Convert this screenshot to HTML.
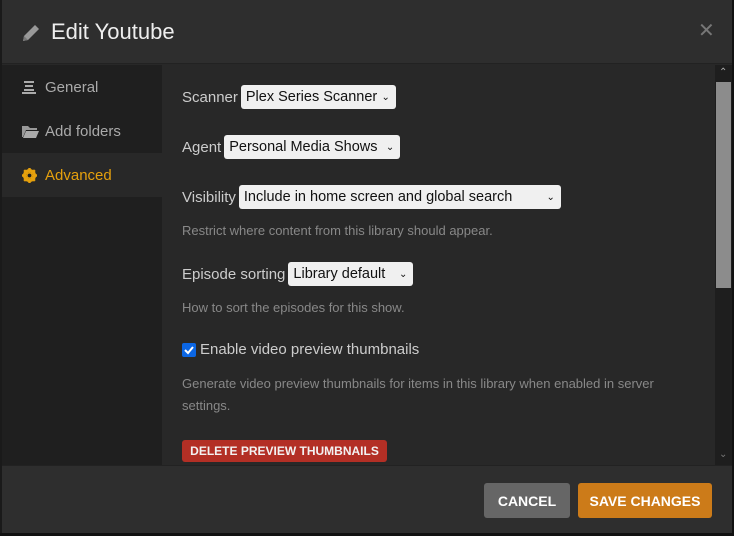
<!DOCTYPE html>
<html><head><style>
*{box-sizing:border-box;margin:0;padding:0}
body{width:734px;height:536px;background:#111;font-family:"Liberation Sans",sans-serif;overflow:hidden;position:relative}
.modal{position:absolute;left:0;top:0;width:732px;height:533px;background:#282828;border-left:2px solid #1a1a1a}
.hdr{position:absolute;left:0;top:0;width:730px;height:64px;background:#2e2e2e;border-bottom:1px solid #222}
.hdr h1{position:absolute;left:49px;top:19px;font-size:22px;font-weight:normal;color:#eee}
.x{position:absolute;left:696px;top:18px;color:#777;font-size:20px}
.side{position:absolute;left:0;top:65px;width:160px;height:400px;background:#1f1f1f}
.si{position:absolute;left:0;width:160px;height:44px;color:#aaa;font-size:15px;padding:14px 0 0 43px}
.si.act{background:#282828;color:#e5a00d}
.ic{position:absolute;left:20px;top:15px}
.content{position:absolute;left:158px;top:65px;width:555px;height:400px;color:#ccc;font-size:15px}
.row{position:absolute;left:22px;display:flex;align-items:center}
.sel{background:#f0f0f0;color:#111;border-radius:3px;height:24px;padding:0 6px 0 5px;margin-left:3px;font-size:14.5px;display:flex;align-items:center;justify-content:space-between}
.help{position:absolute;left:22px;color:#888;font-size:13px;line-height:22px}
.sb{position:absolute;left:713px;top:65px;width:17px;height:400px;background:#1e1e1e}
.thumb{position:absolute;left:1px;top:17px;width:15px;height:206px;background:#8c8c8c}
.ftr{position:absolute;left:0;top:465px;width:730px;height:68px;background:#2e2e2e;border-top:1px solid #222}
.btn{position:absolute;top:17px;height:35px;border-radius:3px;color:#fff;font-weight:bold;font-size:14px;display:flex;align-items:center;justify-content:center}
</style></head><body>
<div class="modal">
<div class="hdr">
<svg style="position:absolute;left:19px;top:23px" width="20" height="20" viewBox="0 0 20 20"><path d="M2 18l1-5L14 2l4 4L7 17z" fill="#999"/><path d="M2 18l1-5 4 4z" fill="#777"/></svg>
<h1>Edit Youtube</h1><div class="x">✕</div></div>
<div class="side">
<div class="si" style="top:0"><svg class="ic" width="14" height="14" viewBox="0 0 14 14"><rect x="2" y="1" width="10" height="2" fill="#aaa"/><rect x="3" y="5" width="8" height="2" fill="#aaa"/><rect x="2" y="9" width="10" height="2" fill="#aaa"/><rect x="0" y="12" width="14" height="2" fill="#aaa"/></svg>General</div>
<div class="si" style="top:44px"><svg class="ic" width="17" height="14" viewBox="0 0 17 14"><path d="M0 2h6l2 2h7v2H4L1 13H0z" fill="#999"/><path d="M4 7h13l-3 7H1z" fill="#aaa"/></svg>Add folders</div>
<div class="si act" style="top:88px"><svg class="ic" width="15" height="15" viewBox="0 0 16 16"><circle cx="8" cy="8" r="5.5" fill="none" stroke="#e5a00d" stroke-width="3"/><g stroke="#e5a00d" stroke-width="2.6"><path d="M8 0v16M0 8h16M2.3 2.3l11.4 11.4M13.7 2.3L2.3 13.7"/></g><circle cx="8" cy="8" r="2" fill="#1f1f1f"/></svg>Advanced</div>
</div>
<div class="content">
<div class="row" style="top:20px">Scanner<div class="sel" style="width:155px">Plex Series Scanner<span style="font-size:10px">⌄</span></div></div>
<div class="row" style="top:70px">Agent<div class="sel" style="width:176px">Personal Media Shows<span style="font-size:10px">⌄</span></div></div>
<div class="row" style="top:120px">Visibility<div class="sel" style="width:322px">Include in home screen and global search<span style="font-size:10px">⌄</span></div></div>
<div class="help" style="top:155px">Restrict where content from this library should appear.</div>
<div class="row" style="top:197px">Episode sorting<div class="sel" style="width:125px">Library default<span style="font-size:10px">⌄</span></div></div>
<div class="help" style="top:232px">How to sort the episodes for this show.</div>
<div class="row" style="top:276px"><div style="width:14px;height:14px;background:#0b66e4;border-radius:2px;margin-right:4px;display:flex;align-items:center;justify-content:center"><svg width="10" height="10" viewBox="0 0 10 10"><path d="M1 5l3 3 5-6" stroke="#fff" stroke-width="2" fill="none"/></svg></div>Enable video preview thumbnails</div>
<div class="help" style="top:308px;width:520px">Generate video preview thumbnails for items in this library when enabled in server settings.</div>
<div style="position:absolute;left:22px;top:375px;width:205px;height:22px;background:#b32f25;border-radius:3px;color:#f2f2f2;font-weight:bold;font-size:12px;display:flex;align-items:center;justify-content:center">DELETE PREVIEW THUMBNAILS</div>
</div>
<div class="sb"><div style="position:absolute;left:4px;top:2px;color:#aaa;font-size:10px">⌃</div><div class="thumb"></div><div style="position:absolute;left:4px;top:384px;color:#777;font-size:10px">⌄</div></div>
<div class="ftr">
<div class="btn" style="left:482px;width:86px;background:#666">CANCEL</div>
<div class="btn" style="left:576px;width:134px;background:#cc7b19">SAVE CHANGES</div>
</div>
</div>
</body></html>
